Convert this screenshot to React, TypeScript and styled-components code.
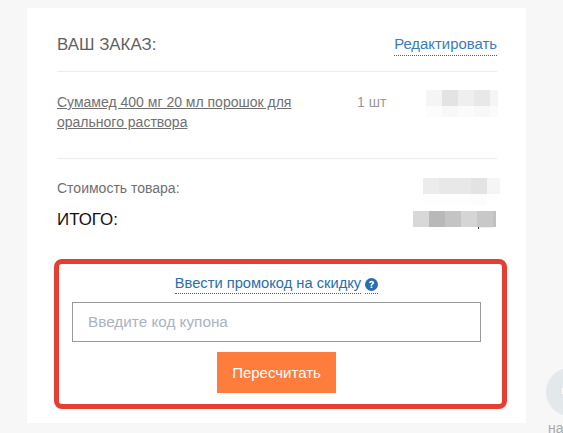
import React from "react";
import styled, { createGlobalStyle } from "styled-components";

const Global = createGlobalStyle`
  html, body { margin: 0; padding: 0; height: 433px; overflow: hidden; background: #f7f7f7; }
  body { font-family: "Liberation Sans", Arial, sans-serif; }
`;

const Page = styled.div`
  position: relative;
  width: 563px;
  height: 433px;
  padding: 8px 37px 0 27px;
  box-sizing: border-box;
  overflow: hidden;
`;

const Card = styled.main`
  height: 415px;
  background: #fff;
  padding: 0 30px;
  box-sizing: border-box;
  display: flex;
  flex-direction: column;
`;

const Header = styled.div`
  height: 64px;
  box-sizing: border-box;
  border-bottom: 1px solid #ececec;
  margin-right: -1px;
  display: flex;
  justify-content: space-between;
  align-items: flex-start;
  padding-top: 26px;
`;

const Title = styled.div`
  font-size: 16.9px;
  line-height: 20px;
  padding-top: 1px;
  color: #5f5f5f;
`;

const EditLink = styled.a`
  font-size: 14.9px;
  line-height: 18px;
  margin-top: 1px;
  padding-bottom: 2px;
  color: #3d7cb8;
  border-bottom: 1px dotted #1a6fb5;
`;

const ItemRow = styled.div`
  height: 87px;
  box-sizing: border-box;
  border-bottom: 1px solid #ececec;
  margin-right: -1px;
  display: flex;
  padding-top: 20px;
`;

const ItemName = styled.a`
  width: 262px;
  font-size: 14px;
  line-height: 20px;
  color: #707070;
  text-decoration: underline;
`;

const Qty = styled.div`
  margin-left: 38px;
  font-size: 14px;
  line-height: 20px;
  color: #999;
`;

const Pixels = styled.div<{ $mt?: number; $mr?: number }>`
  margin-left: auto;
  margin-top: ${(p) => p.$mt ?? 0}px;
  margin-right: ${(p) => p.$mr ?? 0}px;
  display: flex;
  flex-direction: column;
  flex: none;
`;

const PixelLine = styled.div`
  display: flex;
`;

const Pixel = styled.div<{ $c: string; $w?: number; $h: number }>`
  width: ${(p) => p.$w ?? 16}px;
  height: ${(p) => p.$h}px;
  background: ${(p) => p.$c};
`;

const SumRow = styled.div<{ $h: number }>`
  height: ${(p) => p.$h}px;
  display: flex;
  align-items: flex-start;
`;

const SumLabel = styled.div`
  font-size: 14px;
  line-height: 20px;
  color: #707070;
  padding-top: 19px;
`;

const TotalLabel = styled.div`
  font-size: 16.9px;
  line-height: 18px;
  color: #111;
`;

const Promo = styled.section`
  margin: 27px -11px 0 -3px;
  height: 150px;
  box-sizing: border-box;
  border: 5px solid #e53e33;
  border-radius: 8px;
  padding: 11px 21px 0 13px;
  display: flex;
  flex-direction: column;
  align-items: stretch;
`;

const PromoHead = styled.div`
  height: 27px;
  display: flex;
  justify-content: center;
  align-items: flex-start;
  gap: 4px;
`;

const PromoLink = styled.a`
  font-size: 14.7px;
  line-height: 17px;
  height: 18px;
  color: #2a6ead;
  border-bottom: 1px dotted #1a6fb5;
`;

const HelpWrap = styled.span`
  display: flex;
  align-items: center;
  height: 18px;
  border-bottom: 1px dotted #1a6fb5;
`;

const HelpIcon = styled.svg`
  width: 13px;
  height: 13px;
  flex: none;
`;

const CouponInput = styled.input`
  height: 40px;
  width: 100%;
  box-sizing: border-box;
  border: 1px solid #999;
  border-radius: 0;
  outline: none;
  padding: 0 15px;
  font: 15.3px "Liberation Sans", Arial, sans-serif;
  color: #333;
  background: #fff;
  &::placeholder { color: #a9b3bf; opacity: 1; }
`;

const SubmitButton = styled.button`
  align-self: center;
  margin-top: 10px;
  width: 119px;
  height: 41px;
  border: 0;
  background: #ff7d3c;
  color: #fff;
  font: 15px "Liberation Sans", Arial, sans-serif;
  padding: 0;
`;

const ToTop = styled.div`
  position: absolute;
  left: 546px;
  top: 368px;
  width: 48px;
  height: 48px;
  border-radius: 50%;
  background: #e3e8eb;
  &::after {
    content: "";
    position: absolute;
    left: 16px;
    top: 20px;
    width: 8px;
    height: 6px;
    background: #fff;
  }
`;

const ToTopLabel = styled.div`
  position: absolute;
  left: 548px;
  top: 420px;
  font-size: 14px;
  line-height: 16px;
  color: #aaa;
`;

const Mark = styled.div`
  position: absolute;
  left: 478px;
  top: 227px;
  width: 15px;
  height: 1px;
  background: #eee;
  &::before {
    content: "";
    position: absolute;
    left: 0;
    top: 0;
    width: 1px;
    height: 2px;
    background: #333;
  }
`;

const row = (colors: string[], h: number, lastW = 8) => (
  <PixelLine>
    {colors.map((c, i) => (
      <Pixel key={i} $c={c} $h={h} $w={i === colors.length - 1 ? lastW : 16} />
    ))}
  </PixelLine>
);

export default function App() {
  return (
    <Page>
      <Global />
      <Card>
        <Header>
          <Title>ВАШ ЗАКАЗ:</Title>
          <EditLink>Редактировать</EditLink>
        </Header>
        <ItemRow>
          <ItemName>Сумамед 400 мг 20 мл порошок для орального раствора</ItemName>
          <Qty>1 шт</Qty>
          <Pixels $mt={-2} $mr={-1}>
            {row(["#f5f5f5", "#e3e3e3", "#efefef", "#e8e8e8", "#f5f5f5"], 16)}
            {row(["#fcfcfc", "#f8f8f8", "#fbfbfb", "#f8f8f8", "#fbfbfb"], 11)}
          </Pixels>
        </ItemRow>
        <SumRow $h={52}>
          <SumLabel>Стоимость товара:</SumLabel>
          <Pixels $mt={19} $mr={-4}>
            {row(["#ececec", "#e8e8e8", "#e8e8e8", "#e3e3e3", "#f5f5f5"], 16, 13)}
            {row(["#fefefe", "#fefefe", "#fefefe", "#fcfcfc", "#ffffff"], 11, 13)}
          </Pixels>
        </SumRow>
        <SumRow $h={21}>
          <TotalLabel>ИТОГО:</TotalLabel>
          <Pixels>
            {row(["#d8d8d8", "#b8b8b8", "#c4c4c4", "#d5d5d5", "#c8c8c8", "#c0c0c0"], 16, 3)}
          </Pixels>
        </SumRow>
        <Promo>
          <PromoHead>
            <PromoLink>Ввести промокод на скидку</PromoLink>
            <HelpWrap>
              <HelpIcon viewBox="0 0 24 24">
                <circle cx="12" cy="12" r="12" fill="#2a6ead" />
                <path
                  d="M7.6 9.2c.2-2.6 2.1-4 4.6-4 2.6 0 4.5 1.4 4.5 3.7 0 1.7-1 2.6-2.1 3.3-1 .6-1.3 1-1.3 1.9h-3c0-1.9.6-2.8 1.8-3.6 1-.6 1.5-1 1.5-1.6 0-.7-.6-1.2-1.4-1.2-.9 0-1.5.6-1.6 1.6zM10.3 15.6h3.2v3h-3.2z"
                  fill="#fff"
                />
              </HelpIcon>
            </HelpWrap>
          </PromoHead>
          <CouponInput placeholder="Введите код купона" />
          <SubmitButton>Пересчитать</SubmitButton>
        </Promo>
      </Card>
      <Mark />
      <ToTop />
      <ToTopLabel>на</ToTopLabel>
    </Page>
  );
}
